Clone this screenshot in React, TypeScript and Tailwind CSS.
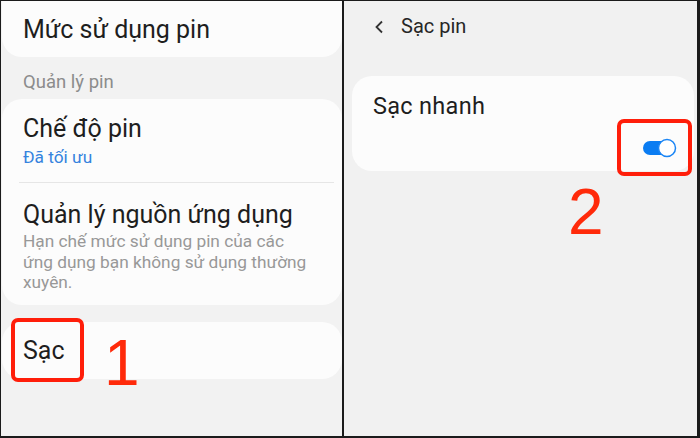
import React from "react";

const font = { fontFamily: "Roboto, 'Noto Sans', Arial, sans-serif" };

export default function App() {
  return (
    <div
      className="w-[700px] h-[438px] bg-[#1b1b1b] flex gap-[2px] pt-[1px] pl-[1px] pb-[2px] overflow-hidden"
      style={font}
    >
      {/* Left panel */}
      <div className="relative w-[341px] h-full bg-[#f2f2f2] flex flex-col overflow-hidden">
        <div className="ml-[1px] h-[56px] bg-[#fcfcfc] rounded-b-[20px] pl-[21px] pt-[15px]">
          <div className="text-[25px] leading-[28px] text-[#1e1e1e]">Mức sử dụng pin</div>
        </div>
        <div className="pl-[22px] mt-[15px] text-[18.5px] leading-[20px] text-[#8c8c8c]">Quản lý pin</div>
        <div className="ml-[1px] mt-[7px] bg-[#fcfcfc] rounded-[20px] pt-[16px] pb-[12px]">
          <div className="pl-[21px] text-[25px] leading-[28px] text-[#1e1e1e]">Chế độ pin</div>
          <div className="pl-[21px] mt-[4px] text-[17.3px] leading-[20px] text-[#3583de]">Đã tối ưu</div>
          <div className="ml-[17px] mr-[8px] mt-[15px] h-[1px] bg-[#e6e6e6]" />
          <div className="pl-[21px] mt-[18px] text-[25px] leading-[28px] text-[#1e1e1e] whitespace-nowrap">
            Quản lý nguồn ứng dụng
          </div>
          <div className="pl-[21px] pr-[10px] mt-[2px] text-[17.3px] leading-[20.5px] text-[#989898] whitespace-nowrap">
            Hạn chế mức sử dụng pin của các
            <br />
            ứng dụng bạn không sử dụng thường
            <br />
            xuyên.
          </div>
        </div>
        <div className="relative ml-[1px] mt-[17px] h-[57px] bg-[#fcfcfc] rounded-[20px] pl-[21px] pt-[15px]">
          <div className="text-[25px] leading-[28px] text-[#1e1e1e]">Sạc</div>
          <div className="absolute left-[9px] top-[-4px] w-[73px] h-[64px] border-[4px] border-[#ff1e0a] rounded-[7px]" />
        </div>
        <div
          className="absolute left-[103px] top-[330px] text-[64px] leading-[64px] text-[#ff2a0a]"
          style={{ fontFamily: "'Liberation Sans', Arial, sans-serif" }}
        >
          1
        </div>
      </div>

      {/* Right panel */}
      <div className="relative w-[353px] h-full bg-[#f1f1f1] flex flex-col">
        <div className="flex items-center pt-[12px] h-[38px]">
          <svg className="ml-[30px] mt-[1px]" width="10" height="14" viewBox="0 0 10 14">
            <path d="M8 1.5 L2.5 7 L8 12.5" fill="none" stroke="#333" strokeWidth="1.8" />
          </svg>
          <div className="ml-[17px] text-[20px] leading-[24px] text-[#262626]">Sạc pin</div>
        </div>
        <div className="relative ml-[8px] mr-[3px] mt-[37px] h-[95px] bg-[#fcfcfc] rounded-[20px] pl-[21px] pt-[17px]">
          <div className="text-[23.5px] leading-[26px] text-[#1e1e1e] tracking-[0.3px]">Sạc nhanh</div>
          <svg className="absolute left-[290px] top-[62px]" width="36" height="20" viewBox="0 0 36 20">
            <rect x="1" y="3" width="30" height="14" rx="7" fill="#0a7cf2" />
            <circle cx="25" cy="10" r="8.5" fill="#ffffff" stroke="#1a85f5" strokeWidth="1.5" />
          </svg>
          <div className="absolute left-[265px] top-[43px] w-[75px] h-[57px] border-[4px] border-[#ff1e0a] rounded-[7px]" />
        </div>
        <div
          className="absolute left-[224px] top-[179px] text-[64px] leading-[64px] text-[#ff2a0a]"
          style={{ fontFamily: "'Liberation Sans', Arial, sans-serif" }}
        >
          2
        </div>
      </div>
    </div>
  );
}
